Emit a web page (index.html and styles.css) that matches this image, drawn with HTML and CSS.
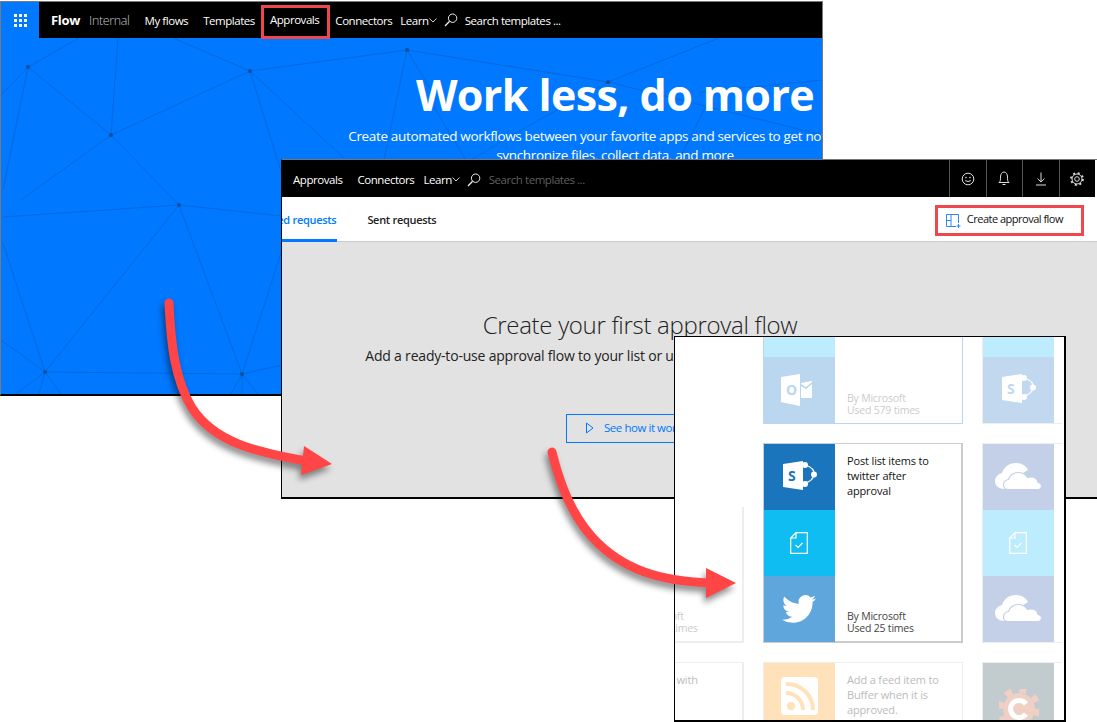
FILE: index.html
```html
<!DOCTYPE html>
<html lang="en">
<head>
<meta charset="utf-8">
<title>Flow approvals</title>
<link rel="stylesheet" href="styles.css">
</head>
<body>
<svg class="defs" width="0" height="0" aria-hidden="true">
  <symbol id="i-search" viewBox="0 0 14 14"><circle cx="8.6" cy="5.2" r="4.2" fill="none" stroke="currentColor"/><path d="M5.6 8.2 1 13" fill="none" stroke="currentColor" stroke-width="1.3"/></symbol>
  <symbol id="i-chev" viewBox="0 0 8 5"><path d="M.5.5 4 4 7.500.5" fill="none" stroke="currentColor"/></symbol>
  <symbol id="i-sp" viewBox="0 0 35 30"><path d="M1 3 21 0v29L1 26z" fill="currentColor"/><path d="M23 4q10 3 9 9.500T23 22" fill="none" stroke="currentColor" stroke-width="1.300"/><circle cx="23" cy="4" r="3" fill="currentColor"/><circle cx="32" cy="13.500" r="3" fill="currentColor"/><circle cx="23" cy="23" r="3" fill="currentColor"/></symbol>
  <symbol id="i-ol" viewBox="0 0 32 32"><path d="M0 3 19 0v32L0 28z" fill="currentColor"/><path d="M20 9 31 7v1l-6 5-5-3zM20 12l5 3 6-5v14H20z" fill="currentColor"/></symbol>
  <symbol id="i-cloud" viewBox="0 0 47 28"><path d="M10 27C4 27 0 24 0 19c0-4 3-7 7-8 2-6 7-10 14-10 6 0 10 3 12 7l-8 5c-5 1-8 5-9 14z" fill="currentColor"/><path d="M13.500 27.500c-3 0-5-2-5-4.500 0-3 2-5 5-5.500 1-4 5-7 10-7 4 0 7 2 9 5 1-.4 2-.5 3-.5 4 0 7 2 7.500 5.500 2 .5 3.500 2 3.500 3.500 0 2.500-2 3.500-4 3.500z" fill="currentColor" stroke="var(--tile)" stroke-width="1.200"/></symbol>
  <symbol id="i-doc" viewBox="0 0 18 22"><path d="M6 .700h11.300v20.600H.700V6zM6 .700V6H.700" fill="none" stroke="currentColor" stroke-width="1.200"/><path d="m5.500 13 2.500 2.500 4.500-4.500" fill="none" stroke="currentColor" stroke-width="1.100"/></symbol>
  <symbol id="i-tw" viewBox="0 0 24 24"><path fill="currentColor" d="M23.953 4.570a10 10 0 01-2.825.775 4.958 4.958 0 002.163-2.723c-.951.555-2.005.959-3.127 1.184a4.920 4.920 0 00-8.384 4.482C7.690 8.095 4.067 6.130 1.640 3.162a4.822 4.822 0 00-.666 2.475c0 1.710.870 3.213 2.188 4.096a4.904 4.904 0 01-2.228-.616v.060a4.923 4.923 0 003.946 4.827 4.996 4.996 0 01-2.212.085 4.936 4.936 0 004.604 3.417 9.867 9.867 0 01-6.102 2.105c-.390 0-.779-.023-1.170-.067a13.995 13.995 0 007.557 2.209c9.053 0 13.998-7.496 13.998-13.985 0-.210 0-.420-.015-.630A9.935 9.935 0 0024 4.590z"/></symbol>
</svg>

<main class="desk">
  <section class="win win-back">
    <header class="nav">
      <div class="waffle"><svg width="13" height="13" viewBox="0 0 13 13" class="waffle-icon"><path d="M0 0h3v3H0zM5 0h3v3H5zM10 0h3v3h-3zM0 5h3v3H0zM5 5h3v3H5zM10 5h3v3h-3zM0 10h3v3H0zM5 10h3v3H5zM10 10h3v3h-3z" fill="currentColor"/></svg></div>
      <span class="brand">Flow</span>
      <span class="env">Internal</span>
      <a class="nav-link first">My flows</a>
      <a class="nav-link">Templates</a>
      <a class="nav-link marked">Approvals</a>
      <a class="nav-link after-marked">Connectors</a>
      <a class="nav-link learn">Learn</a>
      <svg class="chev"><use href="#i-chev"/></svg>
      <svg class="search"><use href="#i-search"/></svg>
      <span class="search-text">Search templates ...</span>
    </header>
    <div class="hero">
      <svg class="mesh" width="822" height="356" viewBox="0 38 822 356">
        <g class="mesh-lines">
          <path d="M27 67 110 135M27 67 78 38M27 67 0 95M27 67 2 190M110 135 117 38M110 135 249 71M110 135 20 200M110 135 178 205M249 71 172 38M249 71 406 50M249 71 345 160M249 71 282 178M406 50 383 160M406 50 436 100M406 50 607 82M607 82 718 38M607 82 520 130 470 160M433 107 465 160M607 82 822 135M178 205 44 372M178 205 241 374M178 205 2 217M178 205 281 216M0 340 44 372M2 243 44 372M44 372 241 374M241 374 281 365M241 374 281 250M44 372 15 394M44 372 38 394M44 372 60 394M241 374 230 394M241 374 241 394M241 374 257 394M822 80 700 92M708 100 678 160"/>
        </g>
        <g class="mesh-dots">
          <circle cx="27" cy="67" r="2"/><circle cx="110" cy="135" r="2"/><circle cx="249" cy="71" r="2"/><circle cx="406" cy="50" r="2"/><circle cx="607" cy="82" r="2"/><circle cx="178" cy="205" r="2"/><circle cx="44" cy="372" r="2"/><circle cx="241" cy="374" r="2"/>
        </g>
      </svg>
      <h1 class="hero-title">Work less, do more</h1>
      <p class="hero-sub">Create automated workflows between your favorite apps and services to get notifications,<br>synchronize files, collect data, and more</p>
    </div>
  </section>

  <section class="win win-mid">
    <header class="nav nav-mid">
      <a class="nav-link start">Approvals</a>
      <a class="nav-link">Connectors</a>
      <a class="nav-link learn learn-mid">Learn</a>
      <svg class="chev"><use href="#i-chev"/></svg>
      <svg class="search"><use href="#i-search"/></svg>
      <span class="search-text dim">Search templates ...</span>
      <div class="nav-tools">
        <button class="tool"><svg width="14" height="14" viewBox="0 0 14 14"><circle cx="7" cy="7" r="5.800" fill="none" stroke="currentColor"/><path d="M4.200 8.500q2.800 2.300 5.600 0" fill="none" stroke="currentColor"/><circle cx="5" cy="5.500" r=".8" fill="currentColor"/><circle cx="9" cy="5.500" r=".8" fill="currentColor"/></svg></button>
        <button class="tool"><svg width="14" height="15" viewBox="0 0 14 15"><path d="M2 11.500h10c-1.500-1-1.500-3-1.500-5.500C10.500 3 9 1 7 1S3.500 3 3.500 6c0 2.500 0 4.500-1.500 5.500z" fill="none" stroke="currentColor"/><path d="M5.500 13.500h3" stroke="currentColor"/></svg></button>
        <button class="tool"><svg width="12" height="14" viewBox="0 0 12 14"><path d="M6 .5v9.500M2.500 6.500 6 10l3.500-3.500M1 13h10" fill="none" stroke="currentColor"/></svg></button>
        <button class="tool"><svg width="14" height="14" viewBox="0 0 14 14"><circle cx="7" cy="7" r="2.300" fill="none" stroke="currentColor"/><circle cx="7" cy="7" r="5" fill="none" stroke="currentColor" stroke-width="1"/><circle cx="7" cy="7" r="6" fill="none" stroke="currentColor" stroke-width="1.800" stroke-dasharray="2 2.710"/></svg></button>
      </div>
    </header>
    <div class="tabs">
      <a class="tab active">Received requests</a>
      <a class="tab">Sent requests</a>
      <a class="create">
        <svg width="15" height="14" viewBox="0 0 15 14"><path d="M12.500 9V.5H.5v12H10M5 .5v12M.5 6.500H5" fill="none" stroke="currentColor"/><path d="M12.500 10v4M10.500 12h4" fill="none" stroke="currentColor"/></svg>
        <span>Create approval flow</span>
      </a>
    </div>
    <div class="empty">
      <h2 class="empty-title">Create your first approval flow</h2>
      <p class="empty-sub">Add a ready-to-use approval flow to your list or use one of the templates to get started.</p>
      <a class="watch"><svg width="8" height="12" viewBox="0 0 8 12"><path d="M.5 1 7 6 .5 11z" fill="none" stroke="currentColor"/></svg><span>See how it works</span></a>
    </div>
  </section>

  <section class="win win-front">
    <div class="grid">
      <div></div>
      <article class="card card-soft-blue">
        <div class="tiles">
          <div class="tile sky"></div>
          <div class="tile sky"></div>
          <div class="tile outlook"><svg class="ic-ol" viewBox="0 0 32 32"><use href="#i-ol"/><text class="glyph" x="5" y="21">O</text></svg></div>
        </div>
        <div class="card-body faded"><p></p><p class="meta">By Microsoft<br>Used 579 times</p></div>
      </article>
      <article class="card card-faint">
        <div class="tiles">
          <div class="tile sky"></div>
          <div class="tile sky"></div>
          <div class="tile sp-pale"><svg class="ic-sp" viewBox="0 0 35 30"><use href="#i-sp"/><text class="glyph" x="6" y="20">S</text></svg></div>
        </div>
      </article>

      <article class="card card-left card-left-mid">
        <div class="card-body faded left-body"><p></p><p class="meta">By Microsoft<br>Used 141 times</p></div>
      </article>
      <article class="card card-main">
        <div class="tiles">
          <div class="tile sharepoint"><svg class="ic-sp" viewBox="0 0 35 30"><use href="#i-sp"/><text class="glyph" x="6" y="20">S</text></svg></div>
          <div class="tile cyan"><svg class="ic-doc"><use href="#i-doc"/></svg></div>
          <div class="tile twitter"><svg class="ic-tw"><use href="#i-tw"/></svg></div>
        </div>
        <div class="card-body"><p class="card-title">Post list items to twitter after approval</p><p class="meta">By Microsoft<br>Used 25 times</p></div>
      </article>
      <article class="card card-faint">
        <div class="tiles">
          <div class="tile drive"><svg class="ic-cloud"><use href="#i-cloud"/></svg></div>
          <div class="tile sky"><svg class="ic-doc"><use href="#i-doc"/></svg></div>
          <div class="tile drive"><svg class="ic-cloud"><use href="#i-cloud"/></svg></div>
        </div>
      </article>

      <article class="card card-left card-left-low">
        <div class="card-body faded left-body"><p class="card-title">Notify me with</p></div>
      </article>
      <article class="card card-faint">
        <div class="tiles">
          <div class="tile rss"><svg width="37" height="38" viewBox="0 0 37 38"><rect width="37" height="38" rx="4" fill="#fff"/><circle cx="10" cy="29" r="4" fill="#ffe2ba"/><path d="M5 16a17 17 0 0 1 17 17M5 7a26 26 0 0 1 27 26" fill="none" stroke="#ffe2ba" stroke-width="4"/></svg></div>
        </div>
        <div class="card-body faded"><p class="card-title">Add a feed item to Buffer when it is approved.</p></div>
      </article>
      <article class="card card-faint">
        <div class="tiles">
          <div class="tile gear"><svg width="40" height="40" viewBox="0 0 40 40"><circle cx="20" cy="20" r="19" fill="none" stroke="#f0cfc4" stroke-width="6" stroke-dasharray="7 7.900"/><circle cx="20" cy="20" r="16" fill="#f0cfc4"/><path d="M27 15a8.500 8.500 0 1 0 0 10" fill="none" stroke="#fff" stroke-width="5"/></svg></div>
        </div>
      </article>
    </div>
  </section>

  <svg class="arrows" width="1097" height="722" viewBox="0 0 1097 722" aria-hidden="true">
    <g class="arrow">
      <path d="M169 303C171 345 175 380 192 408 214 442 255 452 306 461" fill="none" stroke="#ff4545" stroke-width="9" stroke-linecap="round"/>
      <path d="M304 446 332 464 301 475z" fill="#ff4545"/>
    </g>
    <g class="arrow">
      <path d="M552 452C560 485 572 515 592 537 622 570 660 581 710 583" fill="none" stroke="#ff4545" stroke-width="9" stroke-linecap="round"/>
      <path d="M706 568 736 583 706 598z" fill="#ff4545"/>
    </g>
  </svg>
</main>
</body>
</html>
```
FILE: styles.css
```css
* { box-sizing: border-box; }
html, body { margin: 0; height: 100%; background: #fff; overflow: hidden; }
body { font-family: "Open Sans", "Noto Sans", sans-serif; font-size: 11.5px; color: #111; }
p, h1, h2 { margin: 0; font-weight: 400; }
a { display: block; }
.defs { position: absolute; }
.glyph { font-family: "Open Sans", sans-serif; font-weight: 700; font-size: 14px; fill: var(--tile); stroke: none; }

.desk { position: relative; width: 1097px; height: 722px; overflow: hidden; }
.win { position: absolute; overflow: hidden; background: #fff; }
.win-back { left: 0; top: 1px; width: 823px; height: 395px; border: solid #7a7a7a; border-width: 1px 1px 2px 1px; border-bottom-color: #000; background: #0078ff; }
.win-mid { left: 281px; top: 159px; width: 816px; height: 340px; border-top: 1px solid #777; border-left: 1px solid #000; border-bottom: 2px solid #000; }
.win-front { left: 674px; top: 336px; width: 392px; height: 386px; border: 2px solid #000; border-width: 1px 2px 2px 1px; }

.nav { display: flex; align-items: center; height: 36px; background: #000; color: #fff; white-space: nowrap; letter-spacing: -.45px; }
.nav-mid { height: 37px; margin-right: 2px; padding-top: 2px; }
.waffle { display: flex; align-items: center; justify-content: center; width: 38px; height: 100%; background: #0078ff; color: #fff; }
.brand { margin-left: 12px; font-size: 13px; font-weight: 700; letter-spacing: -.3px; }
.env { margin-left: 9px; font-size: 12.500px; font-weight: 300; color: #c4c4c4; letter-spacing: -.35px; }
.nav-link { margin-left: 15px; color: #fff; }
.nav-link.first { margin-left: 15px; }
.nav-link.marked { position: relative; z-index: 1; margin: 4px 0 0 6px; padding: 0 8px 0 6px; height: 34px; line-height: 24px; border: 3px solid #f0474c; }
.nav-link.after-marked { margin-left: 5px; }
.nav-link.learn { margin-left: 8px; }
.nav-link.learn-mid { margin-left: 9px; }
.nav-link.start { margin-left: 11px; }
.chev { width: 8px; height: 5px; margin-left: 0; color: #ccc; }
.search { width: 14px; height: 14px; margin-left: 7px; color: #eee; }
.search-text { margin-left: 7px; color: #fff; }
.search-text.dim { margin-left: 8px; color: #5f5f5f; }

.hero { position: relative; display: flex; flex-direction: column; align-items: center; width: 1228px; height: 356px; color: #fff; }
.mesh { position: absolute; left: 0; top: 0; }
.mesh-lines path { fill: none; stroke: #0a5cb8; stroke-width: .7; opacity: .75; }
.mesh-dots circle { fill: #0a4f9f; }
.hero-title { position: relative; margin-top: 27px; font-size: 43px; line-height: 60px; font-weight: 700; letter-spacing: -.6px; }
.hero-sub { position: relative; margin-top: 2px; font-size: 13.500px; line-height: 19px; text-align: center; letter-spacing: -.34px; }

.nav-tools { display: flex; align-self: stretch; margin: -2px 0 0 auto; }
.tool { display: flex; align-items: center; justify-content: center; width: 36.500px; padding: 0; background: none; border: 0; border-left: 1px solid #555; color: #ddd; }
.tabs { display: flex; align-items: stretch; height: 45px; border-bottom: 1px solid #ccc; font-size: 11px; font-weight: 600; letter-spacing: -.3px; white-space: nowrap; }
.tab { display: flex; align-items: center; padding-top: 2px; }
.tab.active { margin-left: -37px; padding-right: 1px; color: #0078ff; border-bottom: 3px solid #0078ff; margin-bottom: -1px; }
.tab + .tab { margin-left: 30px; padding-top: 0; color: #222; }
.create { display: flex; align-items: center; gap: 6px; margin: 8px 13px 5px auto; padding: 0 18px 0 8px; border: 3px solid #f0474c; font-weight: 400; font-size: 11px; letter-spacing: -.5px; }
.create svg { color: #2a8af0; }
.create span { margin-top: -4px; color: #111; }
.empty { display: flex; flex-direction: column; align-items: center; height: 256px; padding-top: 66px; padding-right: 99px; background: #e2e2e2; }
.empty-title { font-size: 24px; line-height: 34px; font-weight: 300; letter-spacing: -.3px; color: #222; white-space: nowrap; }
.empty-sub { margin-top: 4px; font-size: 14px; line-height: 20px; letter-spacing: -.2px; color: #222; white-space: nowrap; }
.watch { display: flex; align-items: center; gap: 10px; width: 148px; height: 29px; margin-top: 48px; padding: 0 0 2px 19px; border: 1px solid #0078ff; color: #0078ff; white-space: nowrap; letter-spacing: -.45px; }

.grid { display: grid; grid-template-columns: 207px 200px 200px; grid-auto-rows: 200px; gap: 19px; width: 525px; height: 497px; margin: -113px 0 0 -138px; overflow: hidden; }
.card { display: flex; background: #fff; font-size: 11px; }
.card-soft-blue { border: 1px solid #b9d6f7; }
.card-main { border: 2px solid #ccc; border-width: 1px 2px 2px 1px; }
.card-faint { border: 1px solid #eee; }
.card-left { justify-content: flex-end; border: solid #eee; border-width: 0 2px 2px 0; }
.card-left-mid { margin-top: 64px; }
.card-left-low { border-top-width: 1px; }
.tiles { display: flex; flex-direction: column; flex: 0 0 71px; }
.tile { display: flex; align-items: center; justify-content: center; flex: 0 0 66px; color: #fff; background: var(--tile); }
.sky { --tile: #bcecfd; }
.outlook { --tile: #bbd7ef; }
.sp-pale { --tile: #c2d8ee; }
.sharepoint { --tile: #1b75bc; }
.cyan { --tile: #10bdf2; }
.twitter { --tile: #5fa6dc; }
.drive { --tile: #c3d0e7; }
.rss { --tile: #ffe2ba; }
.gear { --tile: #c2cbcd; padding-top: 26px; }
.ic-sp { width: 35px; height: 30px; margin-left: -1px; margin-top: -2px; }
.ic-ol { width: 32px; height: 32px; margin-left: -5px; }
.ic-cloud { width: 47px; height: 28px; margin-left: -1px; margin-top: -2px; }
.ic-doc { width: 18px; height: 22px; margin-left: -2px; }
.ic-tw { width: 34px; height: 34px; margin-left: -1px; }
.card-body { display: flex; flex-direction: column; justify-content: space-between; flex: 1; min-width: 0; padding: 9px 10px 7px 12px; color: #111; }
.card-title { line-height: 15px; letter-spacing: -.15px; }
.meta { font-size: 10.500px; line-height: 12px; color: #444; letter-spacing: -.2px; }
.faded { color: #bbb; }
.faded .meta { color: #ccc; }
.left-body { flex: 0 0 auto; width: 129px; white-space: nowrap; }

.arrows { position: absolute; left: 0; top: 0; pointer-events: none; }
.arrow { filter: drop-shadow(-2px 5px 3px rgba(0,0,0,.45)); }
```
